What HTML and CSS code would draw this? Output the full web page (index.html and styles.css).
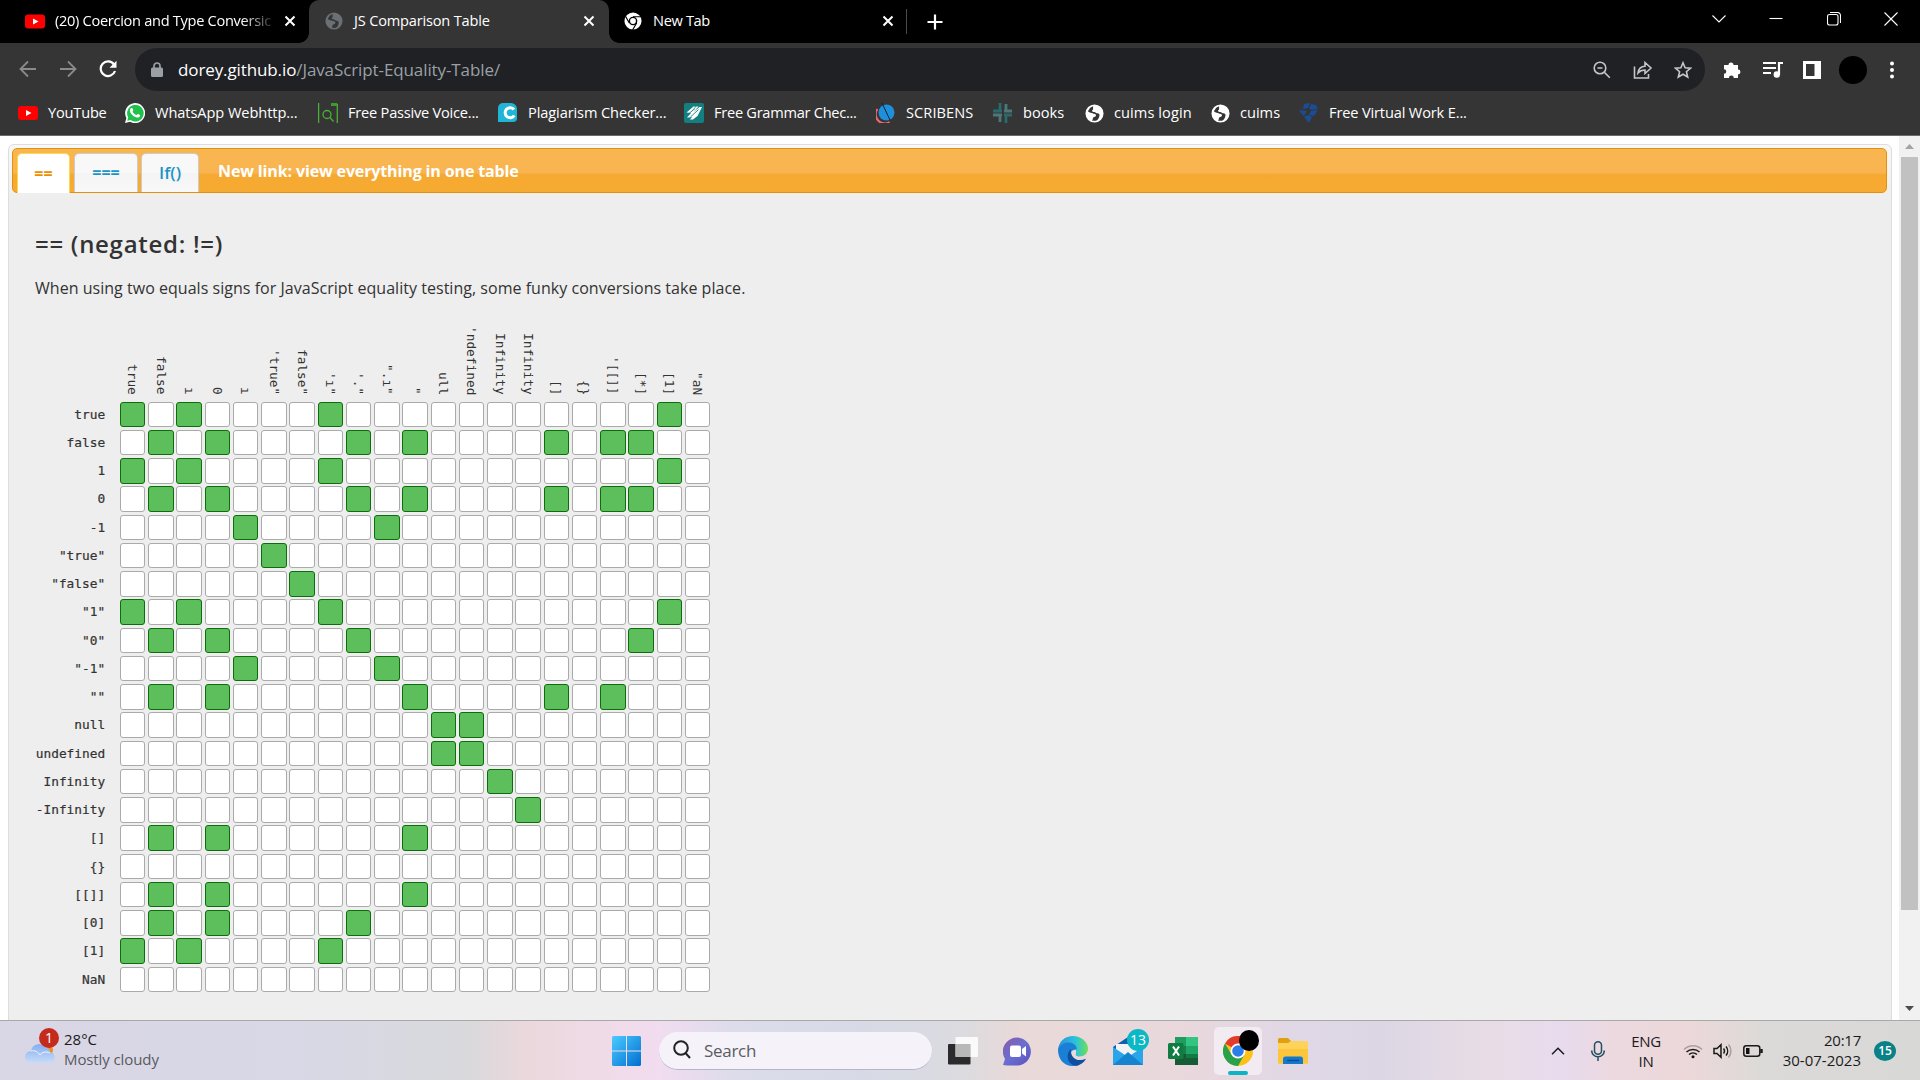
FILE: index.html
```html
<!DOCTYPE html>
<html lang="en">
<head>
<meta charset="utf-8">
<title>JS Comparison Table</title>
<link rel="stylesheet" href="styles.css">
</head>
<body>
<svg class="defs" width="0" height="0">
  <defs>
    <symbol id="yt" viewBox="0 0 20 14"><rect width="20" height="14" rx="3" fill="#f00"/><path d="M8 4l5.500 3L8 10z" fill="#fff"/></symbol>
    <symbol id="x" viewBox="0 0 12 12"><path d="M1.500 1.500l9 9M10.500 1.500l-9 9" stroke="#fff" stroke-width="2" fill="none"/></symbol>
    <symbol id="globe" viewBox="0 0 20 20"><circle cx="10" cy="10" r="9.500" fill="currentColor"/><path d="M8.500 2.300L5.500 4 3 7.500c2 2 4 1.500 5.500 2.500s2.500 0 3 1.500-1.500 2-2.500 2.500-.5 2.500-1.500 3.500l4 .2c2.500-1 3-3 3.500-4.500s.5-2.500-1-3.200-2 .2-3-1-2.800-.5-3.500-1.500 1.500-1.200 1-2.500z" fill="var(--cut)"/></symbol>
  </defs>
</svg>
<div class="screen">
  <div class="tabstrip">
    <div class="tab tab-first">
      <svg width="20" height="15"><use href="#yt"/></svg>
      <span class="tab-title fade">(20) Coercion and Type Conversic</span>
      <svg width="12" height="12"><use href="#x"/></svg>
    </div>
    <div class="tab tab-active">
      <svg class="dim" width="18" height="18"><use href="#globe"/></svg>
      <span class="tab-title">JS Comparison Table</span>
      <svg width="12" height="12"><use href="#x"/></svg>
    </div>
    <div class="tab tab-last">
      <svg width="18" height="18" viewBox="0 0 20 20"><circle cx="10" cy="10" r="9.500" fill="#fff"/><circle cx="10" cy="10" r="4.800" fill="#000"/><circle cx="10" cy="10" r="3.200" fill="#fff"/><path d="M10 5.300h9M5.900 12.300L1.800 5M14.100 12.300L9.500 20" stroke="#000" stroke-width="1.300"/></svg>
      <span class="tab-title">New Tab</span>
      <svg width="12" height="12"><use href="#x"/></svg>
    </div>
    <div class="tab-sep"></div>
    <svg class="plus" width="16" height="16"><path d="M8 .5v15M.5 8h15" stroke="#fff" stroke-width="2.200"/></svg>
    <div class="window-controls">
      <svg width="14" height="14" viewBox="0 0 14 14"><path d="M.5 3.500L7 10l6.500-6.500"/></svg>
      <svg width="14" height="14" viewBox="0 0 14 14"><path d="M.5 6.500h13"/></svg>
      <svg width="14" height="14" viewBox="0 0 14 14"><rect x=".5" y="2.500" width="10.500" height="10.500" rx="2"/><path d="M3 .5h7.500a3 3 0 0 1 3 3V11"/></svg>
      <svg width="14" height="14" viewBox="0 0 14 14"><path d="M.5.5l13 13M13.500.5l-13 13"/></svg>
    </div>
  </div>
  <div class="toolbar">
    <div class="nav">
      <svg width="18" height="18" viewBox="0 0 18 18" stroke="#8a8a8a"><path d="M17 9H2M9 1.500L1.500 9 9 16.500"/></svg>
      <svg width="18" height="18" viewBox="0 0 18 18" stroke="#8a8a8a"><path d="M1 9h15M9 1.500L16.500 9 9 16.500"/></svg>
      <svg width="18" height="18" viewBox="0 0 18 18"><path d="M15 4.500A7.300 7.300 0 1 0 16 11" stroke="#fff" stroke-width="2.200"/><path d="M17.500.8v7h-7z" fill="#fff"/></svg>
    </div>
    <div class="omnibox">
      <svg width="12" height="16" viewBox="0 0 12 16"><rect y="5.500" width="12" height="9.500" rx="1.500" fill="#9aa0a6"/><path d="M3 6V4a3 3 0 0 1 6 0v2" stroke="#9aa0a6" stroke-width="1.700" fill="none"/></svg>
      <span class="url">dorey.github.io<span class="path">/JavaScript-Equality-Table/</span></span>
      <div class="omni-actions">
        <svg width="18" height="18" viewBox="0 0 18 18"><circle cx="7" cy="7" r="5.800"/><path d="M4.500 7h5M11.300 11.300l5.500 5.500"/></svg>
        <svg width="20" height="20" viewBox="0 0 20 20"><path d="M1.500 6.500v11.500h14v-4M5 13c.5-4 3-6.500 7-6.700V2.500l6 5.500-6 5.500V10c-3 0-5 .8-7 3z"/></svg>
        <svg width="18" height="18" viewBox="0 0 18 18"><path d="M9 1.800l2.100 5 5.400.4-4.100 3.500 1.300 5.300L9 13.200 4.300 16l1.300-5.300-4.100-3.500 5.400-.4z"/></svg>
      </div>
    </div>
    <svg class="t1" width="19" height="19" viewBox="0 0 19 19"><path d="M1 5h4.500a2.500 2.500 0 1 1 5 0H15v4.500a2.400 2.400 0 1 1 0 4.900V18h-4.200a2.400 2.400 0 0 0-4.900 0H1v-4.200a2.300 2.300 0 0 0 0-4.600z" fill="#fff"/></svg>
    <svg class="t2" width="20" height="18" viewBox="0 0 20 18"><path d="M0 2h13M0 7h13M0 12h8M16 14V2h4" stroke="#fff" stroke-width="2.200" fill="none"/><circle cx="13.800" cy="13.500" r="3.200" fill="#fff"/></svg>
    <svg class="t3" width="18" height="18"><path d="M0 0h18v18H0zM3 3v12h8.500V3z" fill="#fff" fill-rule="evenodd"/></svg>
    <div class="avatar"></div>
    <svg class="t5" width="4" height="18"><circle cx="2" cy="2.500" r="2" fill="#fff"/><circle cx="2" cy="9" r="2" fill="#fff"/><circle cx="2" cy="15.500" r="2" fill="#fff"/></svg>
  </div>
  <div class="bookmarks">
    <div class="bm b1"><svg width="20" height="14"><use href="#yt"/></svg><span>YouTube</span></div>
    <div class="bm b2"><svg width="20" height="20" viewBox="0 0 20 20"><path d="M0 20l1.400-5A10 10 0 1 1 5 18.700z" fill="#fff"/><path d="M2.200 17.800l1-3.400A8.300 8.300 0 1 1 5.600 17z" fill="#1fc04b"/><path d="M6 5.200c1.500-1 2 .8 2.300 1.800.2.700-1 1.200-.6 1.800 1 1.700 2 2.600 3.800 3.200.6 0 1-1.200 1.500-1 .8.300 2.300 1 2.200 1.400-.3 2-2.200 2.500-4.200 1.900C8 13.300 4.500 9.800 4.900 7c.1-.8.600-1.500 1.100-1.800z" fill="#fff"/></svg><span>WhatsApp Webhttp...</span></div>
    <div class="bm b3"><svg width="20" height="20" viewBox="0 0 20 20" fill="none" stroke="#4caf36" stroke-width="1.300"><path d="M.6 0v20M16 1.500h3.300V20"/><path d="M13 0h6v3h-6z" fill="#3f9a2b" stroke="none"/><circle cx="9" cy="11.500" r="4"/><path d="M12 14.500l3.500 4"/></svg><span>Free Passive Voice...</span></div>
    <div class="bm b4"><svg width="20" height="20" viewBox="0 0 20 20"><path d="M5 0h8a6 6 0 0 1 6 6v9a4 4 0 0 1-4 4H0V5a5 5 0 0 1 5-5z" fill="#20b5d6"/><path d="M16 6.500a5 5 0 1 0 .3 6" stroke="#fff" stroke-width="3" fill="none"/></svg><span>Plagiarism Checker...</span></div>
    <div class="bm b5"><svg width="20" height="20" viewBox="0 0 20 20"><rect width="20" height="20" rx="2" fill="#128080"/><path d="M2.500 9.500l7-6h2l-4 4.500 5-4.500h2l-5 5.500 6-5h2.500l-4.500 9-4.500 3.500H6l2-2.500-3.500.500H3l4-4.500z" fill="#fff"/><path d="M5 10.500l6-5M6.500 14l8-7.500" stroke="#128080" stroke-width=".9"/></svg><span>Free Grammar Chec...</span></div>
    <div class="bm b6"><svg width="20" height="20" viewBox="0 0 20 20"><path d="M1.500 6a9 9 0 0 0 12 13" stroke="#f2686e" stroke-width="2" fill="none"/><circle cx="10.500" cy="9.500" r="8" fill="#1e8fdb"/><path d="M6 0l8 17" stroke="#112233" stroke-width="1"/></svg><span>SCRIBENS</span></div>
    <div class="bm b7"><svg width="20" height="20" viewBox="0 0 20 20" fill="none" stroke-width="2.800"><path d="M7 0v8M0 8h9M13 12v8M11 12h8" stroke="#2a6a6c"/><path d="M13 1v7M11 8h8M0 12h9M7 12v7" stroke="#4d7779"/></svg><span>books</span></div>
    <div class="bm b8"><svg width="19" height="19"><use href="#globe"/></svg><span>cuims login</span></div>
    <div class="bm b9"><svg width="19" height="19"><use href="#globe"/></svg><span>cuims</span></div>
    <div class="bm b10"><svg width="20" height="20" viewBox="0 0 20 20" fill="#1c4c94"><path d="M5 1l6-1-2 5-5 1zM12 1l5 1 2 4-7 1-2-2zM0 7l8 1-3 5-3-3zM12 8l7-1-4 6-5-1zM5 14l4-2 4 2-3 6z"/></svg><span>Free Virtual Work E...</span></div>
  </div>
  <div class="viewport">
    <div class="page">
      <div class="panel">
        <div class="page-tabs">
          <div class="ptab ptab-on">==</div>
          <div class="ptab ptab-2">===</div>
          <div class="ptab ptab-3">If()</div>
          <div class="ptab-link">New link: view everything in one table</div>
        </div>
        <h1>== (negated: !=)</h1>
        <p>When using two equals signs for JavaScript equality testing, some funky conversions take place.</p>
        <div class="matrix" id="matrix"></div>
      </div>
    </div>
    <div class="scrollbar">
      <svg width="21" height="21"><path d="M6 13l4.500-5 4.500 5z" fill="#a3a3a3"/></svg>
      <div class="thumb"></div>
      <svg class="down" width="21" height="21"><path d="M6 7l4.500 5L15 7z" fill="#4d4d4d"/></svg>
    </div>
  </div>
  <div class="taskbar">
    <div class="weather">
      <svg width="34" height="40" viewBox="0 0 34 40"><defs><linearGradient id="cl" x2="0" y2="1"><stop offset="0" stop-color="#86aef0"/><stop offset="1" stop-color="#c8dcf8"/></linearGradient></defs><circle cx="22" cy="25" r="6" fill="#f58a1f"/><path d="M6 38a6 6 0 0 1 0-12 8 8 0 0 1 14-4 6 6 0 0 1 5 5 5.600 5.600 0 0 1 0 11z" fill="url(#cl)"/><path d="M6 26c4-1 7 1 9 4 2-3 6-4 10-2" stroke="#eef5ff" fill="none"/></svg>
      <span class="alert">1</span>
      <div class="weather-text"><span>28°C</span><span class="sub">Mostly cloudy</span></div>
    </div>
    <div class="apps">
      <svg class="start" width="29" height="30" viewBox="0 0 29 30"><defs><linearGradient id="wn" x2="1" y2="1"><stop offset="0" stop-color="#4ccbff"/><stop offset="1" stop-color="#006fd0"/></linearGradient></defs><path d="M1 0h13v14.500H0V1zM15 0h13l1 1v13.500H15zM0 15.500h14V30H1l-1-1zM15 15.500h14V29l-1 1H15z" fill="url(#wn)"/></svg>
      <div class="search"><svg width="20" height="20" viewBox="0 0 20 20"><circle cx="9" cy="8" r="6.800"/><path d="M13.500 13l4.500 5"/></svg><span>Search</span></div>
      <svg class="a1" width="30" height="30" viewBox="0 0 30 30"><rect y="8" width="22.500" height="20.500" rx="1" fill="#2b2b2b"/><rect x="7.500" y="1" width="22.500" height="20" rx="1" fill="#fff" opacity=".85"/><path d="M7.500 8h15v13h-15z" fill="#b8b8b8"/></svg>
      <svg class="a2" width="30" height="30" viewBox="0 0 30 30"><defs><linearGradient id="ch" x2="1" y2="1"><stop offset="0" stop-color="#8a5aa8"/><stop offset=".5" stop-color="#6a6fd0"/><stop offset="1" stop-color="#5a52c0"/></linearGradient></defs><path d="M0 29l2-6A14 14 0 1 1 15 29.500H4z" fill="url(#ch)"/><rect x="7" y="9.500" width="11" height="11.500" rx="2" fill="#fff"/><path d="M19 13l4-3v10.500l-4-3z" fill="#fff"/></svg>
      <svg class="a3" width="30" height="30" viewBox="0 0 30 30"><defs><linearGradient id="e1"><stop offset="0" stop-color="#2c8fdf"/><stop offset=".6" stop-color="#2cc4d8"/><stop offset="1" stop-color="#6fe052"/></linearGradient></defs><path d="M0 14C1 5 7 0 15 0s15 6 15 12.500c0 5-4 8-8.500 8-3 0-4.500-1-3.500-3 1-3-1-7.500-7-7.500-5 0-9 2-11 4z" fill="url(#e1)"/><path d="M0 14c1-5 6-7.500 11-7.500 5 0 8.500 4 7.500 7-6 0-9 6-4 12 2 3 6 3 8 2.500-3 2-6 2-8 2C6 30 0 23 0 14z" fill="#1b7fd6"/><path d="M13 13c-5 4-5 15 5 16.700 5-.7 8-3.700 10-7-9 4-16-1-15-9.700z" fill="#0e4f9f"/></svg>
      <div class="badged a4"><svg width="30" height="28" viewBox="0 0 30 28"><path d="M0 10L15 0l15 10v18H0z" fill="#0f5fae"/><path d="M3 7h24v12H3z" fill="#f2f2f4"/><path d="M0 10l15 10 15-10v18H0z" fill="#2aa5ea"/><path d="M0 28l15-13 15 13z" fill="#1583d0"/></svg><span class="count">13</span></div>
      <svg class="a5" width="30" height="28" viewBox="0 0 30 28"><path d="M7 0h12v28H7z" fill="#1f9c60"/><path d="M18 0h12v9H18z" fill="#32c481"/><path d="M7 9h11v9H7z" fill="#17804a"/><path d="M18 9h12v8H18z" fill="#1fa565"/><path d="M7 17h23v11H7z" fill="#185c37"/><path d="M18 17h12v4H18z" fill="#107c41"/><rect y="6" width="15.500" height="16" rx="1.500" fill="#107c41"/><path d="M5 9.500l6 9M11 9.500l-6 9" stroke="#fff" stroke-width="2"/></svg>
      <div class="chrome-btn"><svg width="30" height="30" viewBox="0 0 30 30"><circle cx="15" cy="15" r="15" fill="#fbc116"/><path d="M15 15L2 7.500A15 15 0 0 1 28 7.500H15z" fill="#e33b2e"/><path d="M2 7.500A15 15 0 0 0 15 30l6.500-11.500L15 22l-6.500-3.500z" fill="#28a14a"/><circle cx="15" cy="15" r="7.500" fill="#fff"/><circle cx="15" cy="15" r="5.800" fill="#2b7de9"/></svg><span class="blob"></span><span class="underline"></span></div>
      <svg class="a6" width="30" height="28" viewBox="0 0 30 28"><path d="M0 2l1-1h9l3 3v5H0z" fill="#e0a010"/><path d="M0 6h10l3-2h16l1 1v22H0z" fill="#ffd35a"/><path d="M0 12h30v14.500H0z" fill="#fbc53c"/><path d="M5 27v-5a2.500 2.500 0 0 1 2.500-2.500h15A2.500 2.500 0 0 1 25 22v5z" fill="#1379cf"/><path d="M9 23.500h12" stroke="#0b4d94" stroke-width="1.500"/></svg>
    </div>
    <div class="tray">
      <svg class="up" width="14" height="8" viewBox="0 0 14 8"><path d="M1 7.300L7 1.300l6 6"/></svg>
      <svg class="mic" width="14" height="20" viewBox="0 0 14 20"><rect x="3.500" y=".8" width="7" height="12.500" rx="3.500"/><path d="M.7 9.500a6.300 6.300 0 0 0 12.600 0M7 16v4"/></svg>
      <div class="lang"><span>ENG</span><span>IN</span></div>
      <svg class="wifi" width="20" height="16" viewBox="0 0 20 16"><path d="M1 6.500a12.500 12.500 0 0 1 18 0" opacity=".3"/><path d="M3.500 9a9.500 9.500 0 0 1 13 0M6 11.500a6 6 0 0 1 8 0"/><circle cx="10" cy="13.800" r="1.500" fill="#111" stroke="none"/></svg>
      <svg class="vol" width="20" height="16" viewBox="0 0 20 16"><path d="M1 5.500h3L8 1.700v12.600L4 10.500H1zM10.500 5.500a4 4 0 0 1 0 5M13 3.500a7 7 0 0 1 0 9"/><path d="M15.500 1.500a10 10 0 0 1 0 13" opacity=".3"/></svg>
      <svg class="bat" width="21" height="12" viewBox="0 0 21 12"><rect x=".8" y=".8" width="16" height="10.400" rx="2.500"/><rect x="3" y="3" width="3.500" height="6" fill="#111" stroke="none"/><path d="M18.500 4v4" stroke-width="2.500"/></svg>
      <div class="clock"><span class="time">20:17</span><span>30-07-2023</span></div>
      <span class="notif">15</span>
    </div>
  </div>
</div>
<script src="table.js"></script>
</body>
</html>
```
FILE: table.js
```js
// Row label, value, and the text of the rotated column header.
const entries = [
  ['true', () => true, 'true'],
  ['false', () => false, 'false'],
  ['1', () => 1, 'ı'],
  ['0', () => 0, '0'],
  ['-1', () => -1, 'ı'],
  ['"true"', () => 'true', "'true\""],
  ['"false"', () => 'false', 'false"'],
  ['"1"', () => '1', "'ı\""],
  ['"0"', () => '0', "'.\""],
  ['"-1"', () => '-1', '".ı"'],
  ['""', () => '', '"'],
  ['null', () => null, 'ull'],
  ['undefined', () => undefined, "'ndefined"],
  ['Infinity', () => Infinity, 'Infinity'],
  ['-Infinity', () => -Infinity, 'Infinity'],
  ['[]', () => [], '[]'],
  ['{}', () => ({}), '{}'],
  ['[[]]', () => [[]], "'[[]]"],
  ['[0]', () => [0], '[*]'],
  ['[1]', () => [1], '[1]'],
  ['NaN', () => NaN, '"aN']
];

const matrix = document.getElementById('matrix');

function add(className, text) {
  const el = document.createElement('div');
  el.className = className;
  if (text) el.textContent = text;
  matrix.appendChild(el);
}

add('corner');
entries.forEach(([, , head]) => add('col-label', head));
entries.forEach(([label, rowValue]) => {
  add('row-label', label);
  entries.forEach(([, colValue]) => {
    add(rowValue() == colValue() ? 'cell equal' : 'cell');
  });
});
```
FILE: styles.css
```css
* { box-sizing: border-box; }
body { margin: 0; overflow: hidden; font-family: "Open Sans", "Noto Sans", sans-serif; }
svg { flex: none; display: block; }
.defs { position: absolute; }
.screen { width: 1920px; height: 1080px; display: flex; flex-direction: column; background: #fff; }

/* tab strip */
.tabstrip { height: 43px; background: #000; display: flex; align-items: center; color: #fff; font-size: 14.600px; }
.tab { height: 43px; display: flex; align-items: center; padding-bottom: 1px; flex: none; }
.tab-title { flex: 1; white-space: nowrap; line-height: 22px; padding-bottom: 2px; letter-spacing: -.19px; }
.tab-first { width: 309px; padding-left: 25px; padding-right: 13px; }
.tab-first .tab-title { margin: 0 9px 0 10px; letter-spacing: -.300px; }
.fade { -webkit-mask-image: linear-gradient(90deg, #000 85%, transparent 101%); mask-image: linear-gradient(90deg, #000 85%, transparent 101%); }
.tab-active { width: 300px; padding-left: 16px; padding-right: 14px; background: #353535; border-radius: 10px 10px 0 0; --cut: #353535; position: relative; }
.tab-active::before, .tab-active::after { content: ""; position: absolute; bottom: 0; width: 10px; height: 10px; }
.tab-active::before { left: -10px; background: radial-gradient(circle at 0 0, #000 9.500px, #353535 10px); }
.tab-active::after { right: -10px; background: radial-gradient(circle at 100% 0, #000 9.500px, #353535 10px); }
.tab-active .tab-title { margin-left: 11px; }
.dim { color: #6b7075; }
.tab-last { width: 297px; padding-left: 15px; padding-right: 12px; }
.tab-last .tab-title { margin-left: 11px; letter-spacing: -.350px; }
.tab-sep { width: 1px; height: 25px; background: #4a4a4a; }
.plus { margin-left: 20px; }
.window-controls { margin-left: auto; display: flex; gap: 43.500px; padding-right: 22px; padding-bottom: 6px; }
.window-controls svg { fill: none; stroke: #fff; stroke-width: 1.1; }

/* toolbar */
.toolbar { height: 48px; background: #353535; display: flex; align-items: center; padding-top: 5px; }
.nav { display: flex; gap: 22px; width: 135px; padding-left: 19px; margin-top: -1px; }
.nav svg { fill: none; stroke-width: 1.8; }
.omnibox { width: 1570px; height: 43px; border-radius: 22px; background: #202124; display: flex; align-items: center; padding: 0 14px 0 16px; }
.url { color: #fff; font-size: 17px; letter-spacing: -.110px; margin-left: 15px; padding-bottom: 1px; white-space: nowrap; flex: 1; }
.path { color: #9aa0a6; letter-spacing: -.100px; }
.omni-actions { display: flex; gap: 21.500px; align-items: center; margin-right: -1px; }
.omni-actions svg { fill: none; stroke: #c4c7c9; stroke-width: 1.6; }
.t1 { margin-left: 18px; }
.t2 { margin-left: 21px; }
.t3 { margin-left: 20px; }
.avatar { width: 28px; height: 28px; border-radius: 50%; background: #000; margin-left: 18px; }
.t5 { margin-left: 23px; }

/* bookmarks bar */
.bookmarks { height: 45px; background: #353535; border-bottom: 1px solid #6a6a6a; display: flex; align-items: center; padding-left: 18px; color: #fff; font-size: 14.600px; --cut: #353535; }
.bm { display: flex; align-items: center; gap: 10px; white-space: nowrap; flex: none; }
.bm span { padding-bottom: 2px; }
.b1 { width: 107px; letter-spacing: -.200px; }
.b2 { width: 193px; letter-spacing: -.070px; }
.b3 { width: 180px; letter-spacing: -.220px; }
.b4 { width: 186px; letter-spacing: -.110px; }
.b5 { width: 192px; letter-spacing: -.270px; }
.b6 { width: 117px; letter-spacing: .080px; }
.b7 { width: 92px; }
.b8 { width: 126px; letter-spacing: .080px; }
.b9 { width: 88px; }
.b10 { letter-spacing: -.150px; }

/* web page */
.viewport { height: 884px; display: flex; overflow: hidden; }
.page { width: 1899px; padding: 8px 7px 0 8px; }
.panel { height: 900px; border: 1px solid #ddd; border-radius: 6px; background: linear-gradient(#f8f8f8, #eee 55px); padding: 3px 4px 0 3px; color: #333; }
.page-tabs { height: 45px; border: 1px solid #e78f08; border-radius: 5px; background: linear-gradient(#f8b650 0, #f8b450 55%, #f6a930 60%, #f6ab33 100%); display: flex; padding: 4px 0 0 4px; font-size: 16px; font-weight: 700; }
.ptab { height: 39px; border: 1px solid #ccc; border-bottom: 0; border-radius: 5px 5px 0 0; background: linear-gradient(#f8f8f8 50%, #f4f4f4 50%, #f8f8f8); color: #1c94c4; display: flex; align-items: center; justify-content: center; margin-right: 4px; padding-bottom: 2px; }
.ptab-on { width: 53px; height: 40px; border-color: #fbd850; background: #fff; color: #eb8f00; }
.ptab-2 { width: 64px; margin-right: 3px; }
.ptab-3 { width: 58px; font-weight: 600; font-size: 17px; }
.ptab-link { color: #fff; height: 36px; display: flex; align-items: center; margin-left: 15px; white-space: nowrap; letter-spacing: -.130px; }
h1 { font-size: 24px; font-weight: 600; letter-spacing: .710px; margin: 33px 0 0 23px; line-height: 36px; }
p { font-size: 16px; letter-spacing: .030px; margin: 14px 0 0 23px; line-height: 24px; white-space: nowrap; }

.matrix { margin: 24.250px 0 0 12px; display: grid; grid-template-columns: 93.150px repeat(21, 25.500px); grid-template-rows: 74.700px repeat(21, 25.500px); gap: 2.750px; width: 700px; font: 12.800px "DejaVu Sans Mono", monospace; }
.row-label { text-align: right; padding-right: 12px; line-height: 25px; -webkit-text-stroke: .200px #333; }
.col-label { writing-mode: vertical-rl; text-align: right; line-height: 25.500px; padding-bottom: 4px; white-space: nowrap; }
.cell { border: 1px solid #aaa; border-radius: 3px; background: #fff; }
.equal { background: #5cbf5c; border-color: #0b6e0b; }

.scrollbar { width: 21px; background: #f1f1f1; display: flex; flex-direction: column; }
.thumb { width: 17px; height: 753px; margin-left: 2px; background: #c1c1c1; }
.down { margin-top: auto; }

/* taskbar */
.taskbar { height: 60px; border-top: 1px solid #a9a9a9; display: flex; align-items: center; color: #1b1b1b; font-size: 15px; background: linear-gradient(90deg, #d9d6e5 0, #d8d8e6 300px, #d8d9e0 400px, #d9d9dc 470px, #ebd8dc 525px, #f0dcea 620px, #f1dcf0 660px, #dcdcea 735px, #d7dae6 860px, #dbdbe0 960px, #e9d9d8 1020px, #e9d8dc 1180px, #e0d8e6 1300px, #dcd6e4 1380px, #e8dde6 1490px, #e8dbee 1560px, #ecd9e0 1610px, #ecd8d9 1690px, #dcdad8 1760px, #d8d8d6 1920px); }
.weather { width: 612px; height: 59px; display: flex; padding: 4px 0 0 25px; position: relative; }
.alert { position: absolute; left: 39px; top: 7px; width: 20px; height: 20px; border-radius: 50%; background: #c42b1c; color: #fff; font-size: 14px; line-height: 20px; text-align: center; }
.weather-text { margin-left: 5px; padding-top: 4px; line-height: 20px; display: flex; flex-direction: column; align-items: flex-start; }
.sub { color: #5a5a5e; letter-spacing: -.100px; }
.apps { display: flex; align-items: center; flex: none; }
.search { width: 273px; height: 38px; border-radius: 19px; background: #f5f3f9; border-bottom: 1px solid #b5b5c4; margin-left: 18px; display: flex; align-items: center; padding-left: 13px; font-size: 17px; letter-spacing: -.300px; color: #5b5b60; gap: 12px; }
.search svg { fill: none; stroke: #222; stroke-width: 2; }
.a1 { margin-left: 16px; }
.a2, .a3, .a4, .a5 { margin-left: 25px; }
.badged { position: relative; }
.count { position: absolute; left: 14px; top: -8px; width: 22px; height: 22px; border-radius: 50%; background: #0bb8c5; color: #fff; font-size: 14px; line-height: 21px; text-align: center; }
.chrome-btn { width: 48px; height: 48px; border-radius: 5px; background: #f2ebf1; margin-left: 16px; display: flex; align-items: center; justify-content: center; position: relative; }
.blob { position: absolute; left: 25px; top: 3px; width: 20px; height: 21px; border-radius: 50%; background: #000; }
.underline { position: absolute; left: 14px; bottom: 0; width: 20px; height: 4px; border-radius: 2px; background: #0bb5c3; }
.a6 { margin-left: 16px; }
.tray { flex: 1; display: flex; align-items: center; }
.tray svg { fill: none; stroke: #1a1a1a; stroke-width: 1.5; }
.up { margin-left: 243px; }
.tray .mic { margin-left: 26px; stroke: #22505c; }
.lang { margin-left: 26px; width: 30px; display: flex; flex-direction: column; align-items: center; line-height: 20px; letter-spacing: -.300px; }
.wifi { margin-left: 22px; }
.vol { margin-left: 10px; }
.bat { margin-left: 10px; }
.clock { width: 97px; display: flex; flex-direction: column; align-items: flex-end; line-height: 20px; }
.time { letter-spacing: -.250px; margin-top: -1px; }
.notif { margin-left: 13px; width: 22px; height: 20px; border-radius: 50%; background: #0a8187; color: #fff; font-size: 12px; font-weight: 600; line-height: 20px; text-align: center; }
```
